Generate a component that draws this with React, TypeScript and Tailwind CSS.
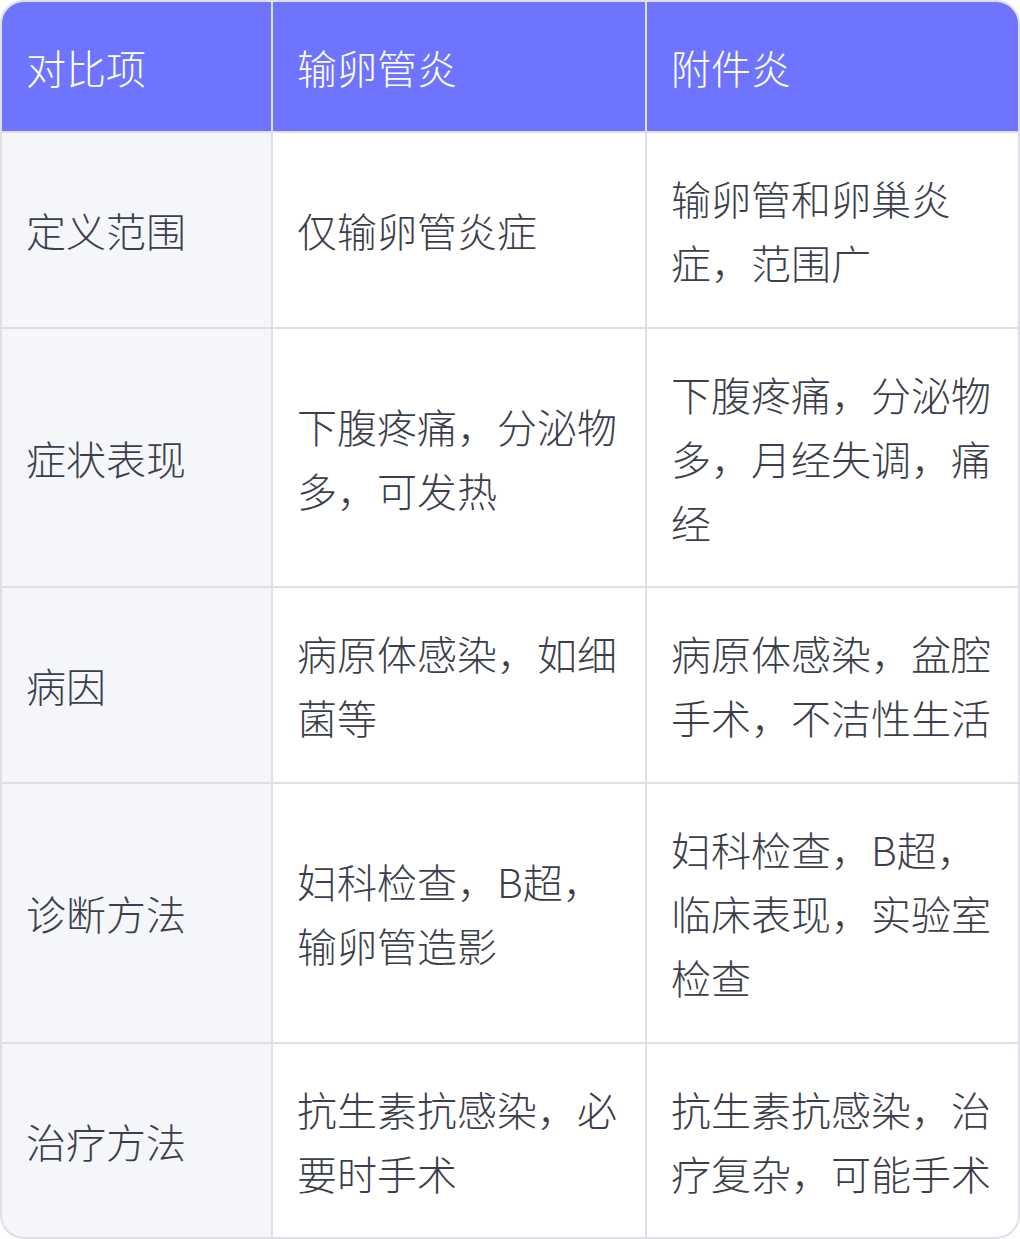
import React from "react";

const rows = [
  { item: "定义范围", a: "仅输卵管炎症", b: "输卵管和卵巢炎症，范围广", pad: "py-[33px]" },
  { item: "症状表现", a: "下腹疼痛，分泌物多，可发热", b: "下腹疼痛，分泌物多，月经失调，痛经", pad: "py-[32.5px]" },
  { item: "病因", a: "病原体感染，如细菌等", b: "病原体感染，盆腔手术，不洁性生活", pad: "py-[33px]" },
  { item: "诊断方法", a: "妇科检查，B超，输卵管造影", b: "妇科检查，B超，临床表现，实验室检查", pad: "py-[33px]" },
  { item: "治疗方法", a: "抗生素抗感染，必要时手术", b: "抗生素抗感染，治疗复杂，可能手术", pad: "py-[32.5px]" },
];

export default function App() {
  return (
    <div
      className="w-[1020px] h-[1239px] bg-white"
      style={{ fontFamily: '"Noto Sans CJK SC", "Noto Sans", sans-serif' }}
    >
      <div className="rounded-3xl border-2 border-[#dfe0e5] overflow-hidden bg-[#dfe0e5]">
        <div className="grid grid-cols-[269px_372px_1fr] gap-[2px] text-[40px] leading-[64px] font-light">
          {/* header */}
          {["对比项", "输卵管炎", "附件炎"].map((h) => (
            <div key={h} className="bg-[#6f74ff] text-white px-6 py-[32.5px] flex items-center">
              {h}
            </div>
          ))}

          {rows.map((r) => (
            <React.Fragment key={r.item}>
              <div className={`bg-[#f5f6fa] text-[#3c3f4b] px-6 flex items-center ${r.pad}`}>{r.item}</div>
              <div className={`bg-white text-[#3c3f4b] px-6 flex items-center ${r.pad}`}>{r.a}</div>
              <div className={`bg-white text-[#3c3f4b] px-6 flex items-center ${r.pad}`}>{r.b}</div>
            </React.Fragment>
          ))}
        </div>
      </div>
    </div>
  );
}
